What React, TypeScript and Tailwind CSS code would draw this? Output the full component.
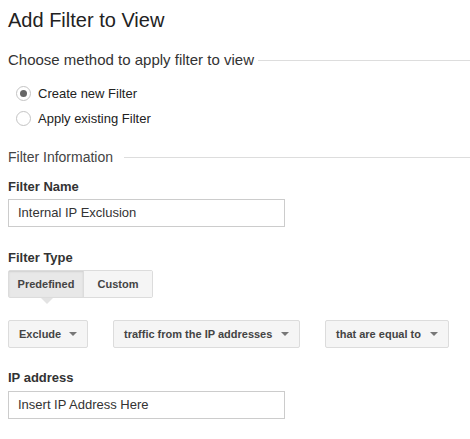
import React from "react";

function Caret() {
  return (
    <svg width="8" height="4" viewBox="0 0 8 4" className="shrink-0">
      <path d="M0 0 L8 0 L4 4 Z" fill="#777" />
    </svg>
  );
}

function Dropdown({ label, width }: { label: string; width: string }) {
  return (
    <div
      className={`flex h-[28px] ${width} items-center justify-between rounded-[2px] border border-[#dcdcdc] bg-[#f5f5f5] pl-[10px] pr-[10px] text-[11px] font-bold text-[#444]`}
    >
      <span>{label}</span>
      <Caret />
    </div>
  );
}

function Radio({ checked, label }: { checked?: boolean; label: string }) {
  return (
    <div className="flex h-[25px] items-center">
      <div className="ml-[8px] flex h-[15px] w-[15px] items-center justify-center rounded-full border border-[#c4c4c4] bg-white">
        {checked && <div className="h-[7px] w-[7px] rounded-full bg-[#666]" />}
      </div>
      <span className="ml-[7px] text-[13px] text-[#222]">{label}</span>
    </div>
  );
}

export default function App() {
  return (
    <div
      className="w-[470px] h-[439px] bg-white pl-[8px] text-[#222] overflow-hidden"
      style={{ fontFamily: '"Liberation Sans", Arial, sans-serif' }}
    >
      <div className="h-[40px] pt-[8px] text-[20px] leading-[24px] text-[#222]">Add Filter to View</div>
      <div className="mt-[10px] flex h-[20px] items-center">
        <span className="text-[15px] text-[#333]">Choose method to apply filter to view</span>
        <div className="ml-[4px] h-px flex-1 bg-[#ddd]" />
      </div>
      <div className="mt-[11px]">
        <Radio checked label="Create new Filter" />
        <Radio label="Apply existing Filter" />
      </div>
      <div className="mt-[16px] flex h-[20px] items-center">
        <span className="text-[14px] text-[#444]">Filter Information</span>
        <div className="ml-[11px] h-px flex-1 bg-[#ddd]" />
      </div>
      <div className="mt-[12px] h-[16px] text-[13px] font-bold leading-[16px] text-[#333]">Filter Name</div>
      <div className="mt-[4px] flex h-[28px] w-[277px] items-center border border-[#ccc] pl-[9px] text-[13px] text-[#333]">
        Internal IP Exclusion
      </div>
      <div className="mt-[23px] h-[16px] text-[13px] font-bold leading-[16px] text-[#333]">Filter Type</div>
      <div className="relative mt-[4px] flex h-[28px] w-[145px] rounded-[2px] border border-[#dcdcdc] text-[11px] font-bold text-[#444]">
        <div className="relative flex w-[74px] items-center justify-center bg-[#e8e8e8] shadow-[inset_0_1px_2px_rgba(0,0,0,0.1)]">
          Predefined
          <div className="absolute left-[32px] top-[27px] h-0 w-0 border-l-[6px] border-r-[6px] border-t-[6px] border-l-transparent border-r-transparent border-t-[#e3e3e3]" />
        </div>
        <div className="flex flex-1 items-center justify-center border-l border-[#dcdcdc] bg-[#f5f5f5]">Custom</div>
      </div>
      <div className="mt-[22px] flex h-[28px]">
        <Dropdown label="Exclude" width="w-[80px]" />
        <div className="ml-[25px]">
          <Dropdown label="traffic from the IP addresses" width="w-[187px]" />
        </div>
        <div className="ml-[25px]">
          <Dropdown label="that are equal to" width="w-[124px]" />
        </div>
      </div>
      <div className="mt-[22px] h-[16px] text-[13px] font-bold leading-[16px] text-[#333]">IP address</div>
      <div className="mt-[5px] flex h-[28px] w-[277px] items-center border border-[#ccc] pl-[9px] text-[13px] text-[#333]">
        Insert IP Address Here
      </div>
    </div>
  );
}
